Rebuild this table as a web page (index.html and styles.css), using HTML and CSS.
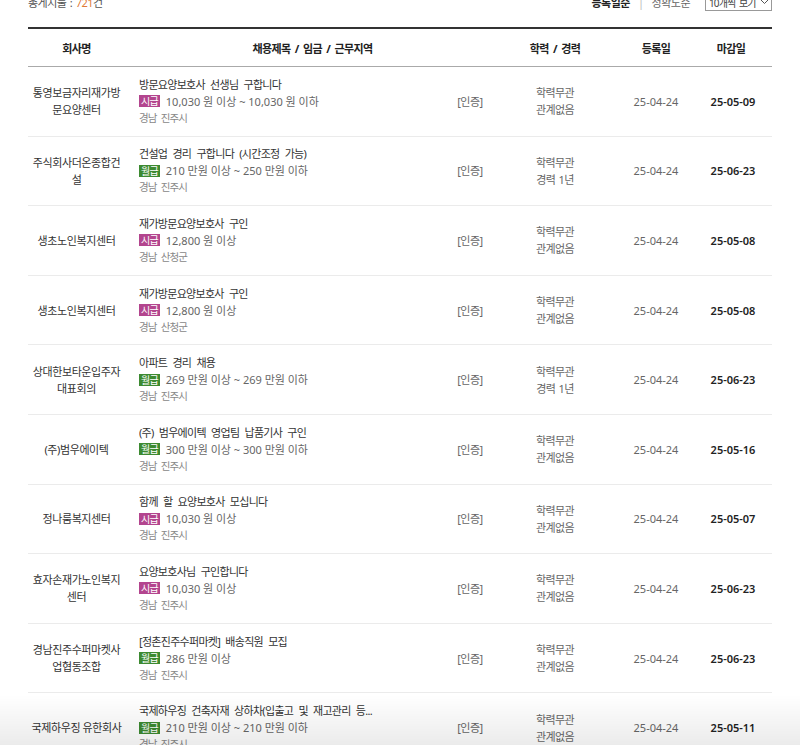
FILE: index.html
```html
<!DOCTYPE html>
<html lang="ko">
<head>
<meta charset="utf-8">
<title>채용정보 목록</title>
<link rel="stylesheet" href="styles.css">
</head>
<body>
<div class="wrap">
  <div class="topbar">
    <div class="total">총게시물 : <span class="num">721</span>건</div>
    <div class="sort">
      <a class="sort-link active">등록일순</a>
      <span class="sep">|</span>
      <a class="sort-link">정확도순</a>
      <div class="select"><span class="sel-text">10개씩 보기</span><svg class="chev" width="9" height="6" viewBox="0 0 9 6"><path d="M1 1l3.5 3.5L8 1" fill="none" stroke="#555" stroke-width="1"/></svg></div>
    </div>
  </div>
  <table class="list">
    <colgroup>
      <col class="c-comp"><col class="c-title"><col class="c-cert"><col class="c-edu"><col class="c-reg"><col class="c-end">
    </colgroup>
    <thead>
      <tr><th>회사명</th><th colspan="2">채용제목 / 임금 / 근무지역</th><th>학력 / 경력</th><th>등록일</th><th class="th-end">마감일</th></tr>
    </thead>
    <tbody>
      <tr>
        <td class="comp">통영보금자리재가방문요양센터</td>
        <td class="info"><div class="ttl">방문요양보호사 선생님 구합니다</div><div class="pay"><span class="badge hour">시급</span>10,030 원 이상 ~ 10,030 원 이하</div><div class="loc">경남 진주시</div></td>
        <td class="cert">[인증]</td>
        <td class="edu">학력무관<br>관계없음</td>
        <td class="reg">25-04-24</td>
        <td class="end">25-05-09</td>
      </tr>
      <tr>
        <td class="comp">주식회사더온종합건설</td>
        <td class="info"><div class="ttl">건설업 경리 구합니다 (시간조정 가능)</div><div class="pay"><span class="badge month">월급</span>210 만원 이상 ~ 250 만원 이하</div><div class="loc">경남 진주시</div></td>
        <td class="cert">[인증]</td>
        <td class="edu">학력무관<br>경력 1년</td>
        <td class="reg">25-04-24</td>
        <td class="end">25-06-23</td>
      </tr>
      <tr>
        <td class="comp">생초노인복지센터</td>
        <td class="info"><div class="ttl">재가방문요양보호사 구인</div><div class="pay"><span class="badge hour">시급</span>12,800 원 이상</div><div class="loc">경남 산청군</div></td>
        <td class="cert">[인증]</td>
        <td class="edu">학력무관<br>관계없음</td>
        <td class="reg">25-04-24</td>
        <td class="end">25-05-08</td>
      </tr>
      <tr>
        <td class="comp">생초노인복지센터</td>
        <td class="info"><div class="ttl">재가방문요양보호사 구인</div><div class="pay"><span class="badge hour">시급</span>12,800 원 이상</div><div class="loc">경남 산청군</div></td>
        <td class="cert">[인증]</td>
        <td class="edu">학력무관<br>관계없음</td>
        <td class="reg">25-04-24</td>
        <td class="end">25-05-08</td>
      </tr>
      <tr>
        <td class="comp">상대한보타운입주자대표회의</td>
        <td class="info"><div class="ttl">아파트 경리 채용</div><div class="pay"><span class="badge month">월급</span>269 만원 이상 ~ 269 만원 이하</div><div class="loc">경남 진주시</div></td>
        <td class="cert">[인증]</td>
        <td class="edu">학력무관<br>경력 1년</td>
        <td class="reg">25-04-24</td>
        <td class="end">25-06-23</td>
      </tr>
      <tr>
        <td class="comp">(주)범우에이텍</td>
        <td class="info"><div class="ttl">(주) 범우에이텍 영업팀 납품기사 구인</div><div class="pay"><span class="badge month">월급</span>300 만원 이상 ~ 300 만원 이하</div><div class="loc">경남 진주시</div></td>
        <td class="cert">[인증]</td>
        <td class="edu">학력무관<br>관계없음</td>
        <td class="reg">25-04-24</td>
        <td class="end">25-05-16</td>
      </tr>
      <tr>
        <td class="comp">정나룸복지센터</td>
        <td class="info"><div class="ttl">함께 할 요양보호사 모십니다</div><div class="pay"><span class="badge hour">시급</span>10,030 원 이상</div><div class="loc">경남 진주시</div></td>
        <td class="cert">[인증]</td>
        <td class="edu">학력무관<br>관계없음</td>
        <td class="reg">25-04-24</td>
        <td class="end">25-05-07</td>
      </tr>
      <tr>
        <td class="comp">효자손재가노인복지센터</td>
        <td class="info"><div class="ttl">요양보호사님 구인합니다</div><div class="pay"><span class="badge hour">시급</span>10,030 원 이상</div><div class="loc">경남 진주시</div></td>
        <td class="cert">[인증]</td>
        <td class="edu">학력무관<br>관계없음</td>
        <td class="reg">25-04-24</td>
        <td class="end">25-06-23</td>
      </tr>
      <tr>
        <td class="comp">경남진주수퍼마켓사업협동조합</td>
        <td class="info"><div class="ttl">[정촌진주수퍼마켓] 배송직원 모집</div><div class="pay"><span class="badge month">월급</span>286 만원 이상</div><div class="loc">경남 진주시</div></td>
        <td class="cert">[인증]</td>
        <td class="edu">학력무관<br>관계없음</td>
        <td class="reg">25-04-24</td>
        <td class="end">25-06-23</td>
      </tr>
      <tr>
        <td class="comp">국제하우징 유한회사</td>
        <td class="info"><div class="ttl">국제하우징 건축자재 상하차(입출고 및 재고관리 등...</div><div class="pay"><span class="badge month">월급</span>210 만원 이상 ~ 210 만원 이하</div><div class="loc">경남 진주시</div></td>
        <td class="cert">[인증]</td>
        <td class="edu">학력무관<br>관계없음</td>
        <td class="reg">25-04-24</td>
        <td class="end">25-05-11</td>
      </tr>
    </tbody>
  </table>
</div>
<div class="fade"></div>
</body>
</html>
```
FILE: styles.css
```css
html, body {
  margin: 0;
  padding: 0;
  background: #fff;
}
body {
  font-family: "Noto Sans", "Noto Sans CJK KR", sans-serif;
  font-size: 11px;
  color: #333;
}
.wrap {
  padding: 0 28px;
}
.topbar {
  display: flex;
  justify-content: space-between;
  align-items: center;
  height: 18px;
  margin-top: -7px;
  margin-bottom: 16px;
}
.total {
  color: #555;
  letter-spacing: -0.5px;
  word-spacing: 1px;
}
.total .num {
  color: #e07a36;
}
.sort {
  display: flex;
  align-items: center;
  letter-spacing: -0.5px;
}
.sort-link {
  color: #666;
}
.sort-link.active {
  color: #222;
  font-weight: 700;
}
.sep {
  color: #bbb;
  margin: 0 8px;
}
.select {
  margin-left: 15px;
  width: 67px;
  height: 18px;
  box-sizing: border-box;
  border: 1px solid #999;
  display: flex;
  align-items: center;
  justify-content: space-between;
  padding: 0 2px 0 3px;
  color: #444;
  white-space: nowrap;
  overflow: hidden;
}
.sel-text {
  font-size: 10px;
  letter-spacing: -0.9px;
  word-spacing: 2px;
}
.chev {
  display: block;
  flex: none;
}
.list {
  width: 100%;
  border-collapse: collapse;
  table-layout: fixed;
  border-top: 2px solid #333;
}
.c-comp { width: 97px; }
.c-cert { width: 60px; }
.c-edu { width: 110px; }
.c-reg { width: 92px; }
.c-end { width: 70px; }
.list th {
  height: 37px;
  padding: 0;
  font-weight: 700;
  color: #222;
  letter-spacing: -0.6px;
  word-spacing: 2px;
  border-bottom: 1px solid #aaa;
  text-align: center;
  vertical-align: middle;
}
.list th.th-end {
  padding-right: 12px;
}
.list td {
  padding: 8.8px 0;
  line-height: 17px;
  border-bottom: 1px solid #ebebeb;
  vertical-align: middle;
  text-align: center;
}
.list td.comp {
  padding-left: 3px;
  padding-right: 3px;
  letter-spacing: -0.4px;
  word-spacing: 0;
  color: #333;
}
.list td.info {
  text-align: left;
  padding-left: 14px;
}
.ttl {
  color: #333;
  letter-spacing: -0.7px;
  word-spacing: 3px;
  white-space: nowrap;
  overflow: hidden;
}
.pay {
  color: #666;
  letter-spacing: 0;
  display: flex;
  align-items: center;
}
.badge {
  display: inline-block;
  height: 12px;
  line-height: 12px;
  padding: 0 2px;
  font-size: 10px;
  letter-spacing: -0.8px;
  color: #fff;
  margin-right: 6px;
}
.badge.hour { background: #b3458e; }
.badge.month { background: #3d8a31; }
.loc {
  color: #888;
  font-size: 10.5px;
  letter-spacing: -0.8px;
  word-spacing: 2px;
}
.list td.cert {
  color: #666;
  letter-spacing: -0.5px;
}
.list td.edu {
  color: #666;
  letter-spacing: -0.6px;
  word-spacing: 1px;
}
.list td.reg {
  color: #666;
}
.list td.end {
  color: #222;
  font-weight: 600;
  padding-right: 8px;
}
.fade {
  position: fixed;
  left: 0;
  right: 0;
  bottom: 0;
  height: 50px;
  background: linear-gradient(to bottom, rgba(0,0,0,0), rgba(0,0,0,0.08));
  pointer-events: none;
}
```
